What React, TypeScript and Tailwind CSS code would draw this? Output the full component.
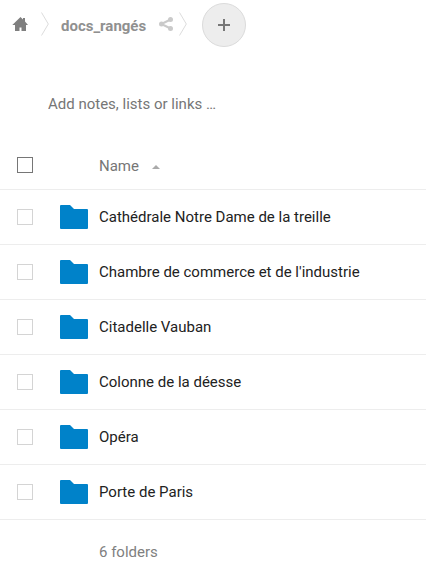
const folders = [
  'Cathédrale Notre Dame de la treille',
  'Chambre de commerce et de l\'industrie',
  'Citadelle Vauban',
  'Colonne de la déesse',
  'Opéra',
  'Porte de Paris',
];

function Separator() {
  return (
    <svg className="h-6 w-2 shrink-0" viewBox="0 0 8 24" fill="none" stroke="#dcdcdc" aria-hidden="true">
      <path d="M.5 .5 7.3 12 .5 23.5" />
    </svg>
  );
}

function HomeIcon() {
  return (
    <svg className="h-4 w-4" viewBox="0 0 16 16" fill="#7f7f7f" aria-hidden="true">
      <path d="M8.500 1 .3 9H3V15h4.500v-3.500h2V15H14V9h2L13 5.600V2h-2v1.400Z" />
    </svg>
  );
}

function ShareIcon() {
  return (
    <svg className="h-4 w-4" viewBox="0 0 16 16" fill="#cacaca" aria-hidden="true">
      <path d="M3.500 8 12.500 3.500M3.500 8 12.500 12.500" stroke="#cacaca" strokeWidth="2" />
      <circle cx="3.500" cy="8" r="2.500" />
      <circle cx="12.500" cy="3.500" r="2.500" />
      <circle cx="12.500" cy="12.500" r="2.500" />
    </svg>
  );
}

function FolderIcon() {
  return (
    <svg className="block h-6 w-7" viewBox="0 0 28 24" fill="#0082c9" aria-hidden="true">
      <path d="M1 0H10L14 4H27Q28 4 28 5V23Q28 24 27 24H1Q0 24 0 23V1Q0 0 1 0Z" />
    </svg>
  );
}

export default function App() {
  return (
    <div className="bg-white text-[15px] leading-5 text-[#222222] [font-family:Roboto,'Liberation_Sans',sans-serif]">
      <header className="flex h-[50px] items-center pl-3">
        <nav aria-label="Breadcrumb" className="flex h-12 items-center self-start">
          <a href="#home" aria-label="Home">
            <HomeIcon />
          </a>
          <div className="ml-[13px] flex">
            <Separator />
          </div>
          <a href="#docs" className="ml-3 pt-1 font-bold text-[#909090]">
            docs_rangés
          </a>
          <button type="button" aria-label="Share" className="ml-3">
            <ShareIcon />
          </button>
          <div className="ml-[5px] flex">
            <Separator />
          </div>
        </nav>
        <button
          type="button"
          aria-label="New"
          className="ml-[15px] flex size-11 items-center justify-center rounded-full border border-[#dbdbdb] bg-[#ededed]"
        >
          <svg className="size-3" viewBox="0 0 12 12" stroke="#777777" strokeWidth="2" aria-hidden="true">
            <path d="M6 0V12M0 6H12" />
          </svg>
        </button>
      </header>
      <main>
        <div className="flex h-[90px] items-center px-12 pt-[18px]">
          <input
            type="text"
            aria-label="Notes"
            placeholder="Add notes, lists or links …"
            className="w-full outline-none placeholder:text-[#767676]"
          />
        </div>
        <table className="w-full table-fixed border-collapse text-left">
          <thead>
            <tr className="h-[49px] border-b border-[#ededed]">
              <th className="w-[60px] pt-0.5 pl-[17px]">
                <input
                  type="checkbox"
                  aria-label="Select all"
                  className="block size-4 appearance-none border border-[#767676]"
                />
              </th>
              <th className="w-[39px]" aria-label="Type" />
              <th className="pt-1 font-normal text-[#767676]">
                <button type="button" className="flex items-center gap-[13px]">
                  Name
                  <svg className="mt-0.5 h-1 w-2" viewBox="0 0 8 4" fill="#aaaaaa" aria-hidden="true">
                    <path d="M0 4 4 0l4 4Z" />
                  </svg>
                </button>
              </th>
            </tr>
          </thead>
          <tbody>
            {folders.map((name) => (
              <tr key={name} className="h-[55px] border-b border-[#ededed]">
                <td className="pl-[17px]">
                  <input
                    type="checkbox"
                    aria-label={`Select ${name}`}
                    className="block size-4 appearance-none border border-[#d4d4d4]"
                  />
                </td>
                <td>
                  <FolderIcon />
                </td>
                <td>
                  <a href="#folder">{name}</a>
                </td>
              </tr>
            ))}
          </tbody>
          <tfoot>
            <tr>
              <td />
              <td />
              <td className="pt-[22px] text-[#808080]">6 folders</td>
            </tr>
          </tfoot>
        </table>
      </main>
    </div>
  );
}
